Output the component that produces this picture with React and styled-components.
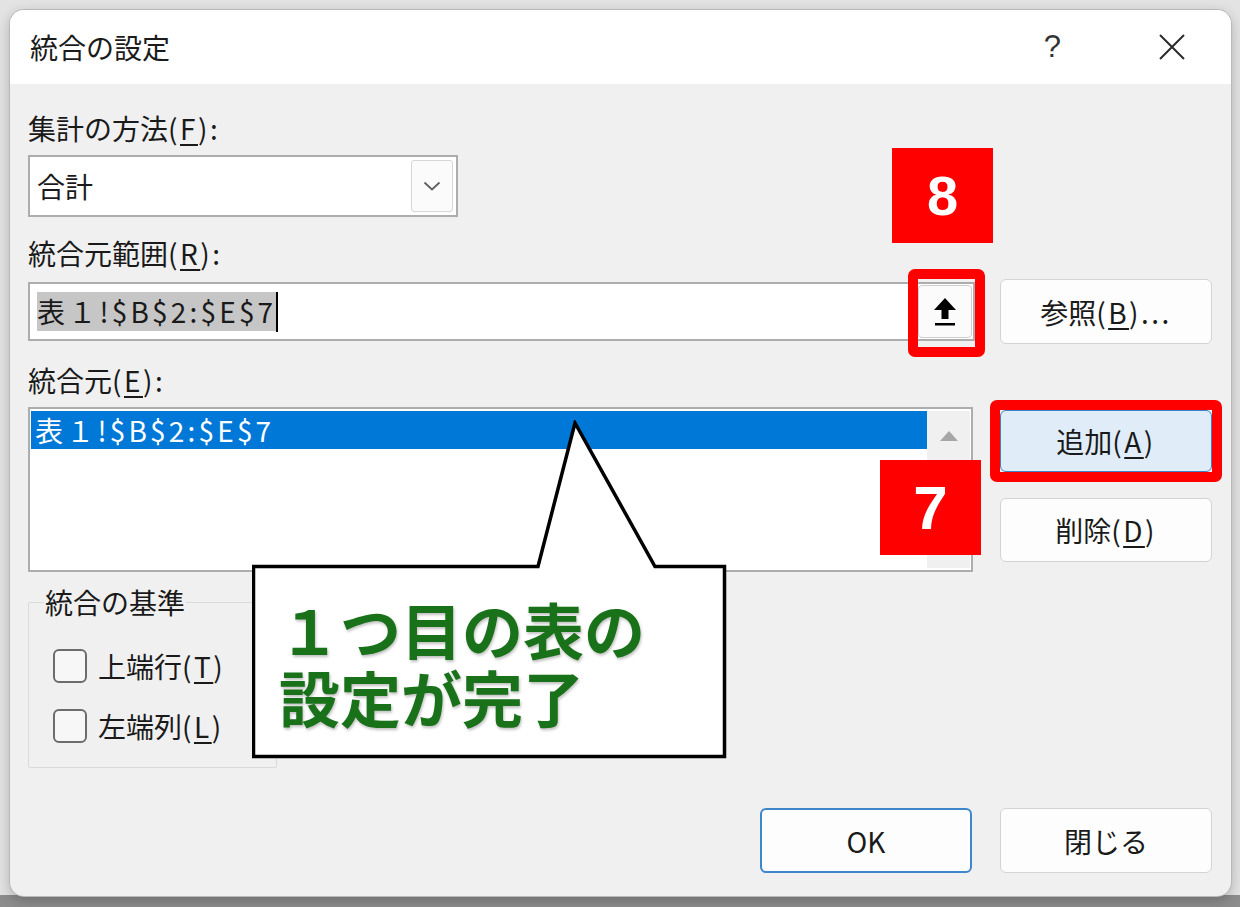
import React from 'react';
import styled, { createGlobalStyle } from 'styled-components';

const GlobalStyle = createGlobalStyle`
  body {
    margin: 0;
    font-family: "Noto Sans CJK JP", "Noto Sans", sans-serif;
  }
`

const Backdrop = styled.div`
  width: 1240px;
  height: 907px;
  box-sizing: border-box;
  padding: 10px 9px 11px 10px;
  background: linear-gradient(to bottom, #e3e3e3 0, #e3e3e3 895px, #8d8d8d 895px);
`

const Dialog = styled.div`
  position: relative;
  height: 100%;
  border-radius: 14px;
  background: #f0f0f0;
  box-shadow: 0 0 0 1px #b9b9b9, 0 4px 14px rgba(0, 0, 0, 0.25);
  display: flex;
  flex-direction: column;
  overflow: hidden;
  color: #1a1a1a;
`

const TitleBar = styled.div`
  height: 74px;
  flex-shrink: 0;
  background: #fff;
  display: flex;
  align-items: center;
  padding: 0 46px 0 20px;
`

const Title = styled.div`
  flex: 1;
  font-size: 28px;
  color: #1b1b1b;
`

const Help = styled.div`
  font-family: "Liberation Sans", sans-serif;
  font-size: 31px;
  color: #333;
  margin-right: 98px;
`

const Body = styled.div`
  padding: 22px 19px 0 18px;
  display: flex;
  flex-direction: column;
`

// the "(X)" access-key part, Latin glyphs are set a little wider in the original
const Key = styled.span`
  letter-spacing: 2.5px;
  u {
    text-underline-offset: 4px;
    text-decoration-thickness: 2px;
  }
`

const Label = styled.div`
  font-size: 28px;
  line-height: 44px;
  margin-top: ${props => props.$gap || 0}px;
`

const Combo = styled.div`
  margin-top: 5px;
  width: 430px;
  height: 62px;
  box-sizing: border-box;
  border: 2px solid #adadad;
  background: #fff;
  display: flex;
  align-items: center;
  padding: 0 3px 0 7px;
  font-size: 28px;
`

const ComboText = styled.div`
  flex: 1;
`

const DropButton = styled.div`
  width: 42px;
  height: 52px;
  box-sizing: border-box;
  border: 1px solid #d6d6d6;
  border-radius: 3px;
  background: #fbfbfb;
  display: flex;
  align-items: center;
  justify-content: center;
`

const FieldRow = styled.div`
  margin-top: 4px;
  display: flex;
  align-items: center;
  gap: 25px;
`

const RangeInput = styled.div`
  flex: 1;
  height: 59px;
  box-sizing: border-box;
  border: 2px solid #adadad;
  background: #fff;
  display: flex;
  align-items: center;
  padding: 0 1px 0 7px;
  font-size: 28px;
`

const Selected = styled.span`
  background: #c6c6c6;
  line-height: 39px;
  letter-spacing: 3.2px;
`

const Caret = styled.span`
  width: 2px;
  height: 40px;
  background: #000;
`

const Spacer = styled.div`
  flex: 1;
`

const CollapseButton = styled.div`
  position: relative;
  width: 54px;
  height: 53px;
  box-sizing: border-box;
  border: 1px solid #cfcfcf;
  border-radius: 4px;
  background: #fbfbfb;
  display: flex;
  align-items: center;
  justify-content: center;
  &::after {
    content: '';
    position: absolute;
    inset: -17px -14px -20px -11px;
    border: 10px solid #ff0000;
    border-radius: 7px;
  }
`

const SideButton = styled.div`
  position: relative;
  width: 212px;
  height: ${props => props.$h || 65}px;
  box-sizing: border-box;
  border: ${props => props.$active ? '1px solid #3b82c9' : props.$primary ? '2px solid #3d86cc' : '1px solid #d3d3d3'};
  border-radius: 6px;
  background: ${props => props.$active ? '#e0edf9' : '#fdfdfd'};
  display: flex;
  align-items: center;
  justify-content: center;
  font-size: 28px;
  ${props => props.$active && `
    &::after {
      content: '';
      position: absolute;
      inset: -11px;
      border: 10px solid #ff0000;
      border-radius: 7px;
    }
  `}
`

const ListRow = styled.div`
  margin-top: 5px;
  display: flex;
  align-items: flex-start;
  gap: 27px;
`

const ListBox = styled.div`
  width: 945px;
  height: 165px;
  box-sizing: border-box;
  border: 2px solid #adadad;
  background: #fff;
  display: flex;
  padding: 2px 1px;
`

const ListItems = styled.div`
  flex: 1;
`

const ListItem = styled.div`
  height: 38px;
  line-height: 38px;
  padding-left: 4px;
  font-size: 28px;
  letter-spacing: 3.2px;
  background: #0078d7;
  color: #fff;
`

const ScrollBar = styled.div`
  width: 43px;
  background: #f0f0f0;
  display: flex;
  justify-content: center;
  padding-top: 19px;
  box-sizing: border-box;
`

const ButtonColumn = styled.div`
  display: flex;
  flex-direction: column;
  gap: 26px;
  padding-top: 3px;
`

const GroupBox = styled.div`
  margin-top: 30px;
  width: 249px;
  height: 166px;
  box-sizing: border-box;
  border: 1px solid #dadada;
  border-radius: 2px;
  padding-left: 15px;
`

const GroupLabel = styled.div`
  width: fit-content;
  margin-top: -16px;
  line-height: 30px;
  font-size: 28px;
  background: #f0f0f0;
  padding: 0 1px;
`

const CheckList = styled.div`
  margin: 27px 0 0 9px;
  display: flex;
  flex-direction: column;
  gap: 16px;
`

const CheckRow = styled.label`
  height: 44px;
  display: flex;
  align-items: center;
  gap: 11px;
  font-size: 28px;
`

const CheckBox = styled.span`
  width: 34px;
  height: 34px;
  box-sizing: border-box;
  border: 2px solid #6c6c6c;
  border-radius: 6px;
  background: #f7f7f7;
`

const Footer = styled.div`
  margin-top: 40px;
  display: flex;
  justify-content: flex-end;
  gap: 28px;
`

const Badge = styled.div`
  position: absolute;
  left: ${props => props.$x}px;
  top: ${props => props.$y}px;
  width: 101px;
  height: 95px;
  background: #ff0000;
  color: #fff;
  display: flex;
  align-items: center;
  justify-content: center;
  font-family: "Liberation Sans", Arial, sans-serif;
  font-weight: bold;
  font-size: ${props => props.$size}px;
`

const Callout = styled.div`
  position: absolute;
  left: 242px;
  top: 410px;
  width: 476px;
  height: 340px;
`

const CalloutText = styled.div`
  position: absolute;
  left: 27px;
  top: 175px;
  font-size: 61px;
  line-height: 68px;
  font-weight: bold;
  color: #197219;
  text-shadow: 1px 2px 3px rgba(0, 0, 0, 0.25);
  white-space: nowrap;
`

const Chevron = () => (
  <svg width="18" height="10" viewBox="0 0 18 10">
    <path d="M1.5 1.5 L9 8.5 L16.5 1.5" fill="none" stroke="#606060" strokeWidth="1.8" />
  </svg>
)

const CollapseIcon = () => (
  <svg width="24" height="32" viewBox="0 0 24 32">
    <polygon points="12,2 23,14 15.5,14 15.5,23 8.5,23 8.5,14 1,14" fill="#000" />
    <rect x="2" y="27" width="20" height="2.5" fill="#000" />
  </svg>
)

const CloseIcon = () => (
  <svg width="26" height="26" viewBox="0 0 26 26">
    <path d="M1 1 L25 25 M25 1 L1 25" stroke="#2b2b2b" strokeWidth="2" />
  </svg>
)

const ScrollUp = () => (
  <svg width="20" height="12" viewBox="0 0 20 12">
    <polygon points="10,1 19,11 1,11" fill="#a6a6a6" />
  </svg>
)

const App = () => {
  return (
    <>
      <GlobalStyle />
      <Backdrop>
        <Dialog>
          <TitleBar>
            <Title>統合の設定</Title>
            <Help>?</Help>
            <CloseIcon />
          </TitleBar>
          <Body>
            <Label>集計の方法<Key>(<u>F</u>):</Key></Label>
            <Combo>
              <ComboText>合計</ComboText>
              <DropButton><Chevron /></DropButton>
            </Combo>

            <Label $gap={14}>統合元範囲<Key>(<u>R</u>):</Key></Label>
            <FieldRow>
              <RangeInput>
                <Selected>表１!$B$2:$E$7</Selected>
                <Caret />
                <Spacer />
                <CollapseButton><CollapseIcon /></CollapseButton>
              </RangeInput>
              <SideButton><span>参照<Key>(<u>B</u>)...</Key></span></SideButton>
            </FieldRow>

            <Label $gap={14}>統合元<Key>(<u>E</u>):</Key></Label>
            <ListRow>
              <ListBox>
                <ListItems>
                  <ListItem>表１!$B$2:$E$7</ListItem>
                </ListItems>
                <ScrollBar><ScrollUp /></ScrollBar>
              </ListBox>
              <ButtonColumn>
                <SideButton $active $h={62}><span>追加<Key>(<u>A</u>)</Key></span></SideButton>
                <SideButton $h={64}><span>削除<Key>(<u>D</u>)</Key></span></SideButton>
              </ButtonColumn>
            </ListRow>

            <GroupBox>
              <GroupLabel>統合の基準</GroupLabel>
              <CheckList>
                <CheckRow><CheckBox /><span>上端行<Key>(<u>T</u>)</Key></span></CheckRow>
                <CheckRow><CheckBox /><span>左端列<Key>(<u>L</u>)</Key></span></CheckRow>
              </CheckList>
            </GroupBox>

            <Footer>
              <SideButton $primary>OK</SideButton>
              <SideButton>閉じる</SideButton>
            </Footer>
          </Body>

          <Badge $x={882} $y={138} $size={56}>8</Badge>
          <Badge $x={870} $y={450} $size={62}>7</Badge>

          <Callout>
            <svg width="476" height="340" viewBox="0 0 476 340">
              <path
                d="M1.5 146.5 L286 146.5 L323 3 L403 146.5 L472.5 146.5 L472.5 336.5 L1.5 336.5 Z"
                fill="#fff"
                stroke="#000"
                strokeWidth="3.5"
              />
            </svg>
            <CalloutText>
              １つ目の表の<br />設定が完了
            </CalloutText>
          </Callout>
        </Dialog>
      </Backdrop>
    </>
  );
}

export default App;
